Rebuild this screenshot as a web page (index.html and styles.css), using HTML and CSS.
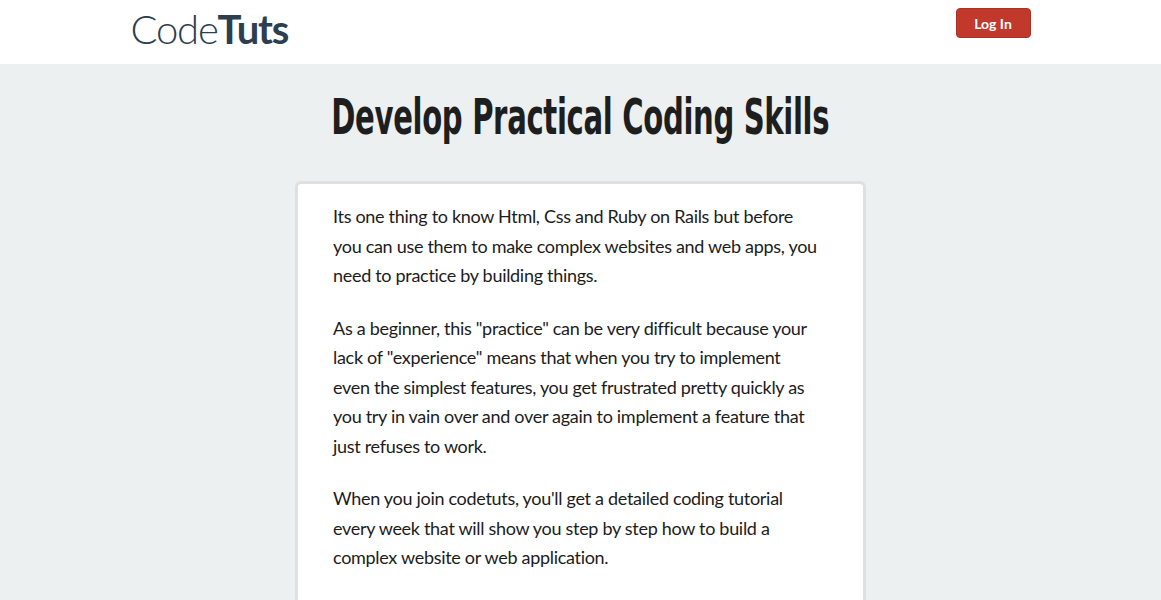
FILE: index.html
```html
<!DOCTYPE html>
<html lang="en">
<head>
<meta charset="utf-8">
<title>CodeTuts</title>
<link rel="stylesheet" href="styles.css">
</head>
<body>
<header class="navbar">
  <div class="container nav-inner">
    <a class="logo" href="#"><span class="logo-light">Code</span><span class="logo-bold">Tuts</span></a>
    <a class="btn-login" href="#">Log In</a>
  </div>
</header>
<main class="main">
  <h1 class="headline"><span class="headline-text">Develop Practical Coding Skills</span></h1>
  <section class="card">
    <p>Its one thing to know Html, Css and Ruby on Rails but before you can use them to make complex websites and web apps, you need to practice by building things.</p>
    <p>As a beginner, this "practice" can be very difficult because your lack of "experience" means that when you try to implement even the simplest features, you get frustrated pretty quickly as you try in vain over and over again to implement a feature that just refuses to work.</p>
    <p>When you join codetuts, you'll get a detailed coding tutorial every week that will show you step by step how to build a complex website or web application.</p>
  </section>
</main>
</body>
</html>
```
FILE: styles.css
```css
* { box-sizing: border-box; }
html, body { margin: 0; padding: 0; }
body {
  background: #ecf0f1;
  font-family: "Lato", "Open Sans", sans-serif;
  color: #1c1c1c;
}
.container {
  width: 900px;
  margin: 0 auto;
}
.navbar {
  background: #ffffff;
  height: 64px;
}
.nav-inner {
  display: flex;
  justify-content: space-between;
  align-items: flex-start;
  height: 64px;
}
.logo {
  text-decoration: none;
  color: #2c3e50;
  font-family: "Lato", sans-serif;
  font-size: 40px;
  line-height: 1;
  margin-top: 9px;
  letter-spacing: -1.2px;
}
.logo-light { font-weight: 300; }
.logo-bold { font-weight: 700; }
.btn-login {
  margin-top: 8px;
  width: 75px;
  height: 30px;
  display: flex;
  align-items: center;
  justify-content: center;
  background: #c0392b;
  border: 1px solid #a93226;
  border-radius: 4px;
  color: #ffffff;
  font-family: "Lato", sans-serif;
  font-weight: 700;
  font-size: 14px;
  text-decoration: none;
}
.main {
  display: flex;
  flex-direction: column;
  align-items: center;
}
.headline {
  margin: 26px 0 0;
  height: 91px;
  text-align: center;
  font-family: "Liberation Sans Narrow", "DejaVu Sans Condensed", sans-serif;
  font-weight: 700;
  font-size: 49px;
  line-height: 56px;
  color: #1e1e1e;
}
.headline-text {
  display: inline-block;
  transform: scaleX(0.66);
  letter-spacing: -0.5px;
}
.card {
  width: 571px;
  background: #ffffff;
  border: 3px solid #dde1e2;
  border-bottom: none;
  border-radius: 6px 6px 0 0;
  padding: 18px 44px 40px 35px;
  font-size: 18px;
  line-height: 29.5px;
  letter-spacing: -0.3px;
}
.card p {
  margin: 0 0 23px;
}
```
